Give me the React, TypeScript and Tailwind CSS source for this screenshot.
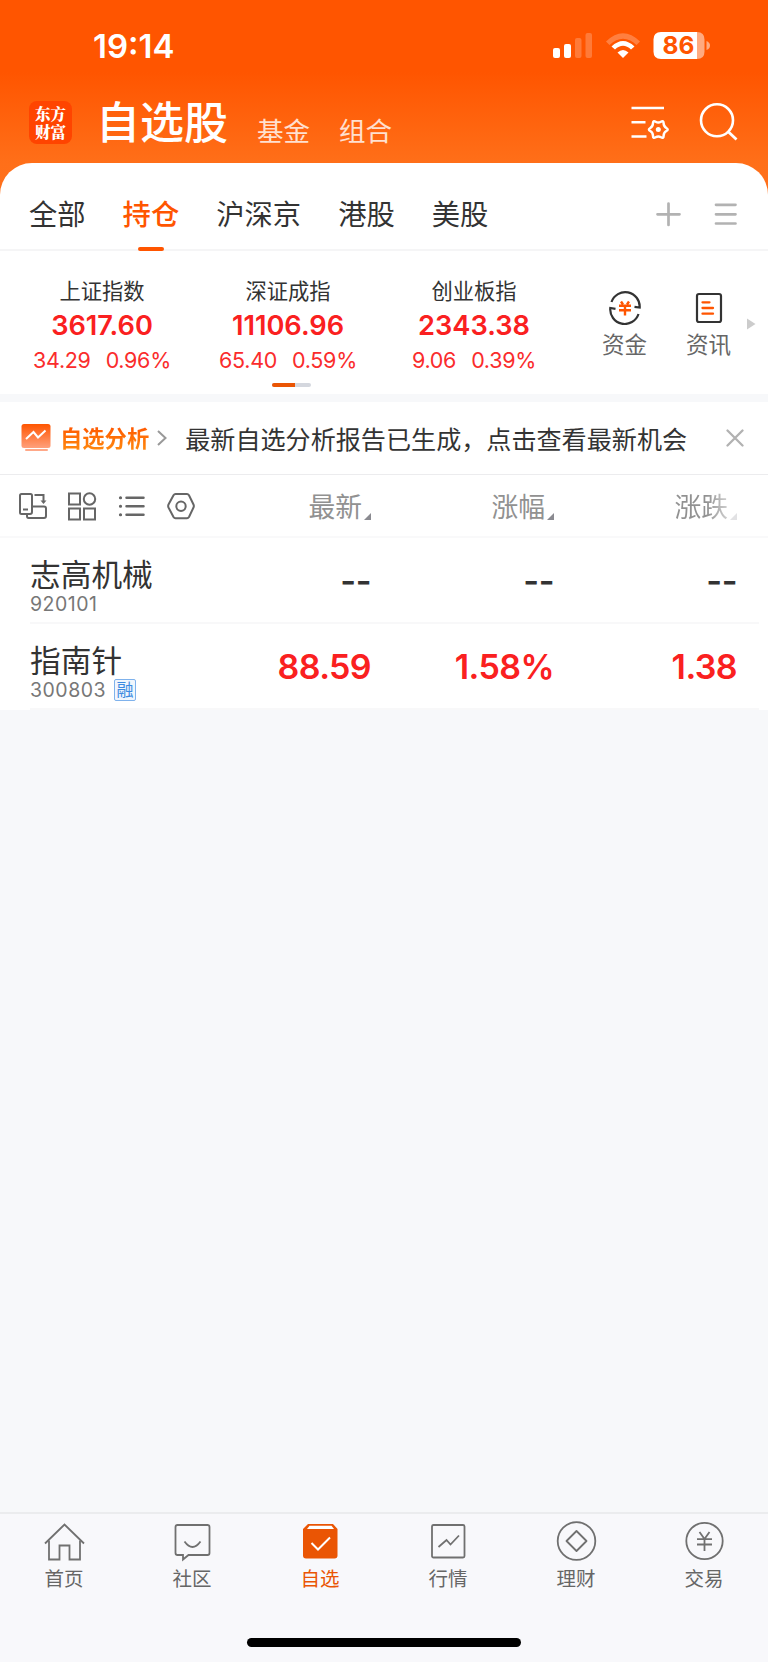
import React, { useState } from 'react';

const tabs = ['全部', '持仓', '沪深京', '港股', '美股'];

const indices = [
  { name: '上证指数', value: '3617.60', change: '34.29', percent: '0.96%' },
  { name: '深证成指', value: '11106.96', change: '65.40', percent: '0.59%' },
  { name: '创业板指', value: '2343.38', change: '9.06', percent: '0.39%' },
];

const stocks = [
  { name: '志高机械', code: '920101', margin: false, values: ['--', '--', '--'] },
  { name: '指南针', code: '300803', margin: true, values: ['88.59', '1.58%', '1.38'] },
];

const StatusBar: React.FC = () => (
  <div className="flex h-[92px] items-start justify-between pl-[93px] pr-[57px]">
    <span className="mt-[26px] text-[33px] font-semibold leading-[40px]">19:14</span>
    <svg className="mt-[30px]" width="158" height="32" viewBox="0 0 158 32" fill="#fff">
      <rect x="0" y="18" width="7" height="10" rx="2" />
      <rect x="11" y="14" width="7" height="14" rx="2" />
      <rect x="22" y="8" width="6.5" height="20" rx="2" opacity="0.22" />
      <rect x="32.5" y="3" width="6.5" height="25" rx="2" opacity="0.22" />
      <path d="M53 11.5 Q70 -5 87 11.5 L83.5 15 Q70 2.5 56.5 15 Z" opacity="0.25" />
      <path d="M58.5 16.5 Q70 5.5 81.5 16.5 L78 19.5 Q70 12 62 19.5 Z" />
      <path d="M64.5 22.5 Q70 17.5 75.5 22.5 L70 28 Z" />
      <path d="M108 2 H144 V29 H108 Q100.5 29 100.5 21.5 V9.5 Q100.5 2 108 2 Z" />
      <path d="M144 2 Q151.5 2 151.5 9.5 V21.5 Q151.5 29 144 29 Z" opacity="0.5" />
      <path d="M153.5 11 Q157 12.5 157 15.5 Q157 18.5 153.5 20 Z" opacity="0.5" />
      <text
        x="125.5"
        y="24.2"
        textAnchor="middle"
        fontSize="24.5"
        fontWeight="700"
        fill="#ff5500"
        fontFamily="Inter, sans-serif"
      >
        86
      </text>
    </svg>
  </div>
);

const Header: React.FC = () => (
  <div className="flex h-[71px] pl-[29px] pr-[29px]">
    <div className="mt-[9px] h-[43px] w-[43px] rounded-[8px] bg-[#ff4400] pt-[3px] text-center font-['Noto_Serif_CJK_SC','Noto_Sans_CJK_SC',serif] text-[15.5px] font-black leading-[18px]">
      东方
      <br />
      财富
    </div>
    <h1 className="ml-[24px] mt-px text-[44px] font-medium leading-[60px]">自选股</h1>
    <span className="ml-[29px] mt-[20px] text-[26.5px] leading-[38px] text-white/80">基金</span>
    <span className="ml-[29px] mt-[20px] text-[26.5px] leading-[38px] text-white/80">组合</span>
    <svg
      className="ml-auto mt-[8px]"
      width="108"
      height="44"
      viewBox="0 0 108 44"
      fill="none"
      stroke="#fff"
      strokeWidth="2.6"
    >
      <path d="M0.5 8 H33 M0.5 22.3 H14.5 M0.5 36.5 H15.5" />
      <path
        d="M8.45 -1.6 Q11.3 0 8.45 1.6 Q5.6 3.25 5.6 6.5 Q5.65 9.8 2.8 8.15 Q0 6.5 -2.8 8.15 Q-5.65 9.8 -5.6 6.5 Q-5.6 3.25 -8.45 1.6 Q-11.3 0 -8.45 -1.6 Q-5.6 -3.25 -5.6 -6.5 Q-5.65 -9.8 -2.8 -8.15 Q0 -6.5 2.8 -8.15 Q5.65 -9.8 5.6 -6.5 Q5.6 -3.25 8.45 -1.6 Z"
        transform="translate(27.3 29.5) scale(0.95)"
      />
      <circle cx="27.3" cy="29.5" r="2.5" fill="#fff" stroke="none" />
      <circle cx="86" cy="20.3" r="16" />
      <path d="M97 31.5 L105.5 39.5" strokeWidth="2.8" />
    </svg>
  </div>
);

const AnalysisIcon: React.FC = () => (
  <svg width="30" height="30" viewBox="0 0 30 30" fill="none">
    <defs>
      <linearGradient id="board" x1="0" y1="0" x2="0" y2="1">
        <stop offset="0" stopColor="#ff5500" />
        <stop offset="1" stopColor="#ffa07c" />
      </linearGradient>
    </defs>
    <rect x="0.5" y="1" width="29" height="24" rx="2.5" fill="url(#board)" />
    <path d="M5 16 L12.5 9 L17 14.5 L24.5 7.5" stroke="#fff" strokeWidth="2" />
    <path d="M5 27 H26" stroke="#ffa888" strokeWidth="2" strokeLinecap="round" />
  </svg>
);

const ToolIcons: React.FC = () => (
  <svg width="180" height="32" viewBox="0 0 180 32" fill="none" stroke="#666" strokeWidth="2">
    <path d="M8 24 H3.5 Q2 24 2 22.5 V5.5 Q2 4 3.5 4 H12.5 Q14 4 14 5.5 V22 Q14 24 12 24 H8" />
    <path d="M14 16.5 H26 Q28 16.5 28 18.5 V26 Q28 28 26 28 H10.5 Q9 28 9 26 V24" />
    <path d="M5 19.5 H10" />
    <path d="M16.5 5 H25.5 V12" />
    <path d="M22.5 10.5 H28.5 L25.5 14 Z" fill="#666" stroke="none" />
    <rect x="51" y="3.5" width="11" height="11" />
    <circle cx="71.5" cy="9" r="5.7" />
    <rect x="51" y="18.5" width="11" height="11" />
    <rect x="66" y="18.5" width="11" height="11" />
    <g strokeWidth="2.5" strokeLinecap="round">
      <path d="M108.5 7.7 H125.5 M108.5 16.2 H125.5 M108.5 24.7 H125.5" />
      <path d="M102.4 7.7 H102.6 M102.4 16.2 H102.6 M102.4 24.7 H102.6" strokeWidth="3" />
    </g>
    <path d="M157.5 4 H169 Q170.2 4 171 5.2 L175.5 14.5 Q176.2 16 175.5 17.5 L171 27 Q170.2 28.3 169 28.3 H157.5 Q156.3 28.3 155.5 27 L150.5 17.5 Q149.8 16 150.5 14.5 L155.5 5.2 Q156.3 4 157.5 4 Z" />
    <circle cx="163" cy="16.2" r="4.7" />
  </svg>
);

const navItems = [
  {
    label: '首页',
    icon: (
      <>
        <path d="M1 20.5 L20.5 1.5 L40 20.5" />
        <path d="M5 17.5 V36.5 H15.5 V22.5 H25.5 V36.5 H36 V17.5" />
      </>
    ),
  },
  {
    label: '社区',
    icon: (
      <>
        <path d="M5.5 2 H35.5 Q37.5 2 37.5 4 V30 Q37.5 32 35.5 32 H16.5 L11 36.5 V32 H5.5 Q3.5 32 3.5 30 V4 Q3.5 2 5.5 2 Z" />
        <path d="M12.5 18.5 Q20.5 29.5 28.5 18.5" />
      </>
    ),
  },
  {
    label: '自选',
    icon: (
      <>
        <path
          d="M8 1 H33 L37.5 6 V32.5 Q37.5 35.5 34.5 35.5 H6 Q3 35.5 3 32.5 V6 Z"
          fill="#ea5504"
          stroke="none"
        />
        <path d="M9.5 2.7 H31.5 L34 6 H7 Z" fill="#fff" stroke="none" />
        <path d="M11.5 20 L18 26.5 L30 14.5" stroke="#fff" strokeWidth="2" />
      </>
    ),
  },
  {
    label: '行情',
    icon: (
      <>
        <rect x="4" y="2" width="32.5" height="32.5" rx="1.5" />
        <path d="M10.5 24 L18.5 17 L22.5 21.5 L31 12.5" />
      </>
    ),
  },
  {
    label: '理财',
    icon: (
      <>
        <circle cx="20.5" cy="18" r="18.8" />
        <path d="M20.5 8 L30.5 18 L20.5 28 L10.5 18 Z" strokeLinejoin="round" />
      </>
    ),
  },
  {
    label: '交易',
    icon: (
      <>
        <circle cx="20.5" cy="18" r="18.2" />
        <path d="M15.5 9 L20.5 16 L25.5 9 M13 16.2 H28 M13 21.5 H28 M20.5 16 V28" />
      </>
    ),
  },
];

const App: React.FC = () => {
  const [activeTab, setActiveTab] = useState('持仓');
  const [activeNav, setActiveNav] = useState('自选');

  return (
    <div className="flex h-[1662px] w-[768px] flex-col overflow-hidden bg-[#f7f8fa] font-['Inter','Noto_Sans_CJK_SC',sans-serif] text-[#333]">
      <div className="bg-[linear-gradient(180deg,#ff5500_0px,#ff5500_72px,#ff6f19_163px,#ff711c_200px)]">
        <div className="text-white">
          <StatusBar />
          <Header />
        </div>

        <div className="flex h-[88px] items-start rounded-t-[32px] border-b-2 border-[#f5f5f6] bg-white pl-[29px] pr-[30px]">
          {tabs.map((tab) => (
            <button
              key={tab}
              onClick={() => setActiveTab(tab)}
              className={`mr-[37px] flex flex-col items-center text-[28.3px] leading-[40px] ${
                activeTab === tab ? 'font-medium text-[#ff5500]' : ''
              }`}
            >
              <span className="mt-[32px]">{tab}</span>
              {activeTab === tab && <span className="mt-[12px] h-[3.5px] w-[26px] rounded-full bg-[#ff5500]" />}
            </button>
          ))}
          <svg
            className="ml-auto mt-[38px]"
            width="82"
            height="26"
            viewBox="0 0 82 26"
            fill="none"
            stroke="#b2b2b2"
            strokeWidth="2.7"
            strokeLinecap="round"
          >
            <path d="M1.5 13.3 H23.5 M12.5 2.5 V24" />
            <path d="M60 3.8 H79.5 M60 13.3 H79.5 M60 22.5 H79.5" />
          </svg>
        </div>
      </div>

      <div className="flex h-[143px] bg-white pl-[9px]">
        <div className="flex flex-col items-center">
          <div className="flex">
            {indices.map((item) => (
              <div key={item.name} className="flex w-[186px] flex-col items-center pt-[25px]">
                <span className="text-[21.3px] leading-[30px]">{item.name}</span>
                <span className="mt-[3px] text-[27.2px] font-semibold leading-[34px] text-[#fa2020]">{item.value}</span>
                <div className="mt-[3px] flex gap-[15px] text-[21.5px] leading-[28px] tracking-[-0.3px] text-[#fa2c2c]">
                  <span>{item.change}</span>
                  <span>{item.percent}</span>
                </div>
              </div>
            ))}
          </div>
          <div className="ml-[7px] mt-[9px] flex h-[4px] w-[39px] overflow-hidden rounded-full bg-[#d4d7de]">
            <div className="w-[23px] bg-[#ea5504]" />
          </div>
        </div>
        <div className="ml-[35px] flex gap-[39px] pt-[40px] text-[22.5px] leading-[32px] text-[#666]">
          <div className="flex flex-col items-center">
            <svg width="34" height="34" viewBox="0 0 34 34" fill="none" stroke="#333" strokeWidth="2.2">
              <path d="M3.5 11 A14.5 14.5 0 0 1 31.7 16.5 L26.5 15.8" />
              <path d="M30.5 23 A14.5 14.5 0 0 1 2.3 17 L7.5 17.8" />
              <path
                d="M13 10.5 L15 13.5 M21 10.5 L19 13.5 M11 14.8 H23 M11 19.2 H23 M17 14 V24.5"
                stroke="#ff5500"
                strokeWidth="2.4"
              />
            </svg>
            <span className="mt-[4px]">资金</span>
          </div>
          <div className="flex flex-col items-center">
            <svg width="34" height="34" viewBox="0 0 34 34" fill="none" stroke="#333" strokeWidth="2.2">
              <rect x="5" y="3" width="24" height="28" rx="2" />
              <path
                d="M10.5 11.3 H17.5 M10.5 17 H21 M10.5 22.7 H21"
                stroke="#ff5500"
                strokeWidth="2.3"
                strokeLinecap="round"
              />
            </svg>
            <span className="mt-[4px]">资讯</span>
          </div>
        </div>
        <svg className="ml-auto mr-[12px] mt-[67px]" width="10" height="12" viewBox="0 0 10 12" fill="#ccc">
          <path d="M1 0.5 L9.5 6 L1 11.5 Z" />
        </svg>
      </div>

      <div className="mt-[8px] flex h-[73px] items-center border-b-[1px] border-[#ececee] bg-white pl-[21px] pr-[24px]">
        <AnalysisIcon />
        <span className="ml-[9px] mt-[2px] bg-gradient-to-b from-[#ff5500] to-[#ff8c10] bg-clip-text text-[22.3px] font-bold leading-[26px] text-transparent">
          自选分析
        </span>
        <svg className="ml-[8px]" width="10" height="18" viewBox="0 0 10 18" fill="none" stroke="#999" strokeWidth="2">
          <path d="M1 2 L8.5 9 L1 16" />
        </svg>
        <span className="ml-[18px] mt-[3px] whitespace-nowrap text-[25.1px] leading-[36px]">
          最新自选分析报告已生成，点击查看最新机会
        </span>
        <svg
          className="ml-auto"
          width="18"
          height="18"
          viewBox="0 0 18 18"
          fill="none"
          stroke="#b2b2b2"
          strokeWidth="2.3"
          strokeLinecap="round"
        >
          <path d="M1.5 1.5 L16.5 16.5 M16.5 1.5 L1.5 16.5" />
        </svg>
      </div>

      <div className="flex h-[63px] items-center border-b-2 border-[#f9f9fa] bg-white pl-[18px] pr-[31px] text-[26.8px] leading-[38px] text-[#919191]">
        <ToolIcons />
        {['最新', '涨幅', '涨跌'].map((label, i) => (
          <div
            key={label}
            className={`flex items-end justify-end gap-[2px] pt-[2px] ${i === 0 ? 'ml-auto' : 'w-[183px]'}`}
          >
            <span
              className={
                i === 2
                  ? 'bg-[linear-gradient(90deg,#919191_60%,#d0d0d0_100%)] bg-clip-text text-transparent'
                  : ''
              }
            >
              {label}
            </span>
            <svg className="mb-[6px]" width="7" height="7" viewBox="0 0 7 7" fill={i === 2 ? '#e2e2e4' : '#8a8a90'}>
              <path d="M7 0 V7 H0 Z" />
            </svg>
          </div>
        ))}
      </div>

      <div className="bg-white">
        {stocks.map((stock) => (
          <div
            key={stock.code}
            className="ml-[30px] mr-[9px] flex h-[86px] items-start border-b-2 border-[#f8f8f9] pr-[22px]"
          >
            <div className="flex-1 pt-[16px]">
              <div className="text-[30.7px] leading-[42px]">{stock.name}</div>
              <div className="-mt-[6px] flex h-[28px] items-center text-[19.5px] leading-[28px] tracking-[0.5px] text-[#777]">
                <span>{stock.code}</span>
                {stock.margin && (
                  <span className="ml-[8px] flex h-[22px] w-[22px] items-center justify-center rounded-[2px] border border-[#7fb2ec] bg-[#f0f6fd] text-[17px] leading-[20px] tracking-normal text-[#3b8ae0]">
                    融
                  </span>
                )}
              </div>
            </div>
            {stock.values.map((value, i) => (
              <span
                key={i}
                className={`w-[183px] text-right text-[34px] font-semibold leading-[42px] ${
                  stock.margin ? 'pt-[22px] tracking-[-0.6px] text-[#fa2020]' : 'pt-[22px] tracking-[-0.5px]'
                }`}
              >
                {value}
              </span>
            ))}
          </div>
        ))}
      </div>

      <div className="mt-auto flex h-[150px] flex-col items-center border-t-2 border-[#ebecee] bg-[#f8f8fb]">
        <div className="flex w-full">
          {navItems.map((item) => (
            <button
              key={item.label}
              onClick={() => setActiveNav(item.label)}
              className={`flex w-32 flex-col items-center pt-[9px] text-[19.5px] leading-[28px] ${
                activeNav === item.label ? 'text-[#ea5504]' : 'text-[#666]'
              }`}
            >
              <svg
                className="overflow-visible"
                width="41"
                height="38"
                viewBox="0 0 41 38"
                fill="none"
                stroke="#707070"
                strokeWidth="1.8"
              >
                {item.icon}
              </svg>
              <span className="mt-[4px]">{item.label}</span>
            </button>
          ))}
        </div>
        <div className="mb-[15px] mt-auto h-[9px] w-[274px] rounded-full bg-black" />
      </div>
    </div>
  );
};

export default App;
